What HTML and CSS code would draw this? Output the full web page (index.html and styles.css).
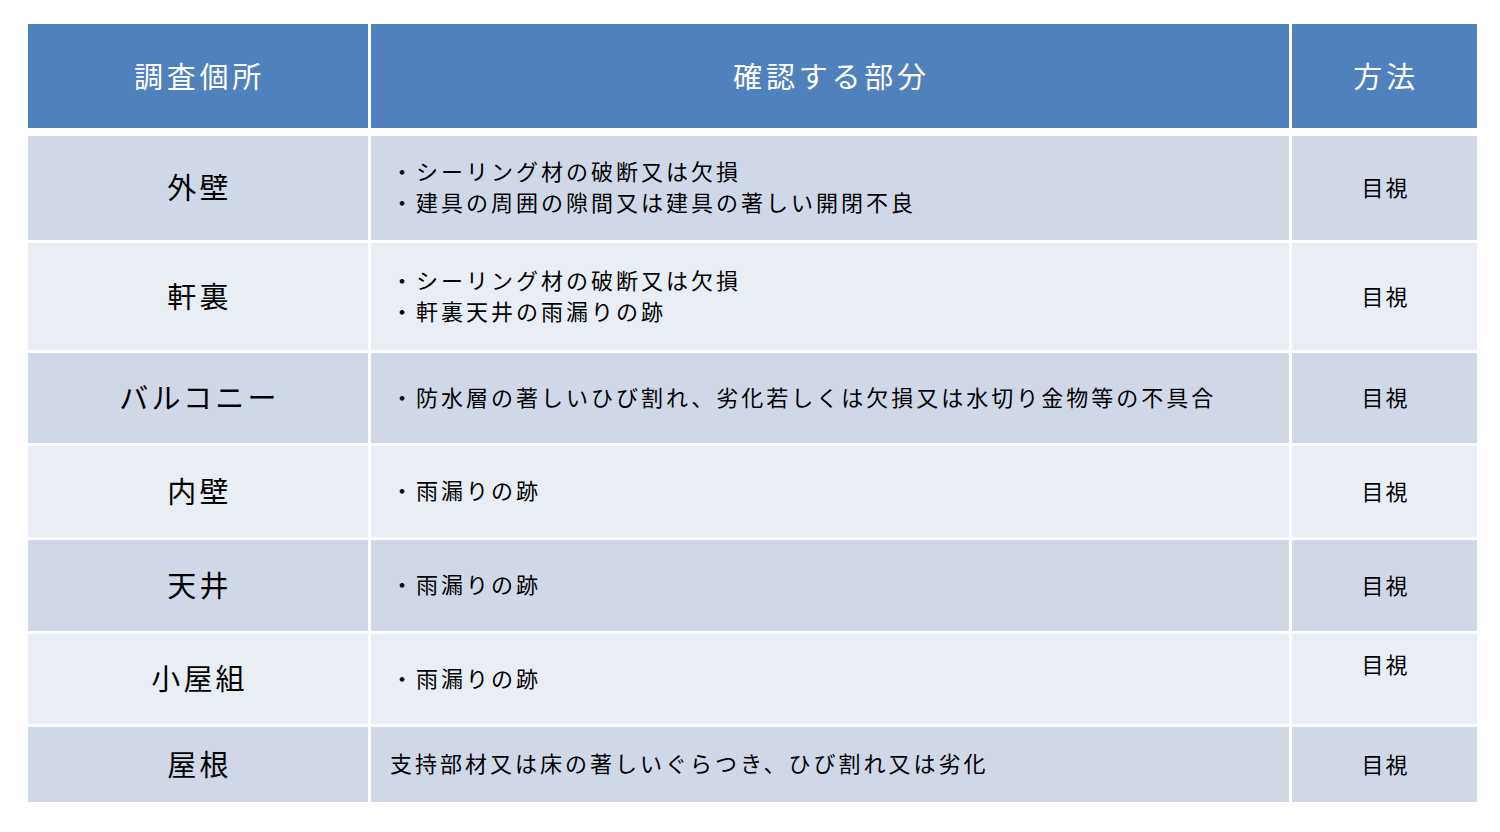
FILE: index.html
```html
<!DOCTYPE html>
<html lang="ja">
<head>
<meta charset="utf-8">
<title>調査個所</title>
<link rel="stylesheet" href="styles.css">
</head>
<body>
<div class="sheet">
  <div class="table head">
    <div class="cell h">調査個所</div>
    <div class="cell h">確認する部分</div>
    <div class="cell h">方法</div>
  </div>
  <div class="table body">
    <div class="cell place dark">外壁</div>
    <div class="cell part dark"><p>・シーリング材の破断又は欠損</p><p>・建具の周囲の隙間又は建具の著しい開閉不良</p></div>
    <div class="cell method dark">目視</div>

    <div class="cell place light">軒裏</div>
    <div class="cell part light"><p>・シーリング材の破断又は欠損</p><p>・軒裏天井の雨漏りの跡</p></div>
    <div class="cell method light">目視</div>

    <div class="cell place dark">バルコニー</div>
    <div class="cell part dark"><p>・防水層の著しいひび割れ、劣化若しくは欠損又は水切り金物等の不具合</p></div>
    <div class="cell method dark">目視</div>

    <div class="cell place light">内壁</div>
    <div class="cell part light"><p>・雨漏りの跡</p></div>
    <div class="cell method light">目視</div>

    <div class="cell place dark">天井</div>
    <div class="cell part dark"><p>・雨漏りの跡</p></div>
    <div class="cell method dark">目視</div>

    <div class="cell place light">小屋組</div>
    <div class="cell part light"><p>・雨漏りの跡</p></div>
    <div class="cell method light raised">目視</div>

    <div class="cell place dark">屋根</div>
    <div class="cell part dark plain"><p>支持部材又は床の著しいぐらつき、ひび割れ又は劣化</p></div>
    <div class="cell method dark">目視</div>
  </div>
</div>
</body>
</html>
```

FILE: styles.css
```css
html, body {
  margin: 0;
  padding: 0;
  background: #ffffff;
}

body {
  font-family: "Noto Sans CJK JP", "Noto Sans", sans-serif;
  color: #000000;
}

.sheet {
  width: 1449px;
  padding: 24px 0 0 28px;
}

.table {
  display: grid;
  grid-template-columns: 340px 918px 185px;
  column-gap: 3px;
  row-gap: 3px;
}

.head {
  grid-template-rows: 104px;
}

.body {
  margin-top: 8px;
  grid-template-rows: 104px 107px 90px 91px 91px 90px 75px;
}

.cell {
  display: flex;
  align-items: center;
  box-sizing: border-box;
  padding-bottom: 4px;
}

.h {
  background: #4f81bd;
  color: #ffffff;
  justify-content: center;
  font-size: 29px;
  letter-spacing: 3.8px;
  padding-left: 3px;
  padding-bottom: 2px;
}

.dark { background: #d0d8e8; }
.light { background: #e9edf4; }

.place {
  justify-content: center;
  font-size: 29px;
  letter-spacing: 3.2px;
  padding-left: 3px;
}

.part {
  flex-direction: column;
  align-items: flex-start;
  justify-content: center;
  padding-left: 20px;
  font-size: 22px;
  letter-spacing: 3px;
}

.part p {
  margin: 0;
  line-height: 31px;
}

.part.plain { padding-left: 19px; }

.method {
  justify-content: center;
  font-size: 22px;
  letter-spacing: 2px;
  padding-left: 2px;
}

.method.raised {
  padding-bottom: 32px;
}
```
